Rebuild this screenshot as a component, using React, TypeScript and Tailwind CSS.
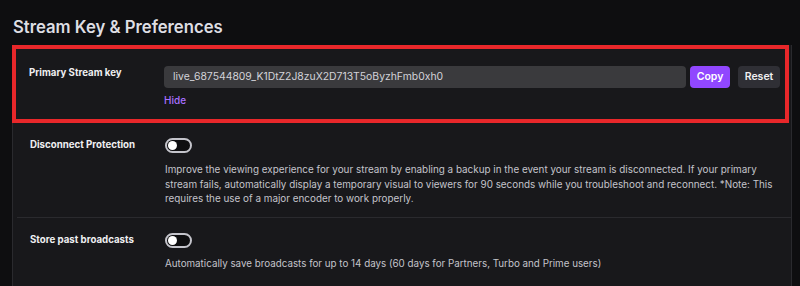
import React, { useState } from "react";

const Toggle = ({ on, onClick }: { on: boolean; onClick: () => void }) => (
  <button
    onClick={onClick}
    className="w-[27px] h-[15px] rounded-full border-2 border-[#c4c4cb] bg-[#0e0e10] flex items-center px-[1px]"
  >
    <span
      className={
        on
          ? "w-[9px] h-[9px] rounded-full bg-white ml-auto"
          : "w-[9px] h-[9px] rounded-full bg-white"
      }
    />
  </button>
);

const App = () => {
  const [hidden, setHidden] = useState(false);
  const [protect, setProtect] = useState(false);
  const [store, setStore] = useState(false);

  return (
    <div
      className="w-[800px] h-[286px] bg-[#0e0e10] overflow-hidden text-[#efeff1]"
      style={{ fontFamily: "Inter, 'Noto Sans', sans-serif" }}
    >
      <h1 className="pl-[13px] pt-[16px] h-[45px] text-[16.7px] font-semibold text-[#dedee3] leading-[22px]">
        Stream Key &amp; Preferences
      </h1>
      <div className="ml-[12px] w-[780px] bg-[#18181b] border-l border-r border-[#2a2a2e]">
        <div className="border-4 border-[#e8272a] -ml-[1px] w-[777px] h-[78px] flex pl-[13px] pt-[17px]">
          <div className="w-[135px] text-[9.7px] font-bold leading-[14px]">Primary Stream key</div>
          <div className="flex flex-col">
            <div className="flex items-center">
              <div className="w-[522px] h-[22px] rounded-[4px] bg-[#3a3a3d] text-[#d3d3d9] text-[10.4px] px-[9px] flex items-center">
                {hidden ? "••••••••••••••••••••••••••••••••••••••••" : "live_687544809_K1DtZ2J8zuX2D713T5oByzhFmb0xh0"}
              </div>
              <button className="ml-[4px] w-[40px] h-[22px] rounded-[4px] bg-[#9147ff] text-white text-[10.5px] font-semibold">
                Copy
              </button>
              <button className="ml-[8px] w-[42px] h-[22px] rounded-[4px] bg-[#2f2f35] text-[#efeff1] text-[10.5px] font-semibold">
                Reset
              </button>
            </div>
            <button
              onClick={() => setHidden(!hidden)}
              className="text-left text-[#a970ff] text-[10px] font-medium mt-[5px] leading-[14px]"
            >
              {hidden ? "Show" : "Hide"}
            </button>
          </div>
        </div>
        <div className="flex pl-[13px] pt-[15px] h-[95px] border-b border-[#2a2a2e] ml-[4px]">
          <div className="w-[135px] text-[9.7px] font-bold leading-[14px]">Disconnect Protection</div>
          <div className="flex flex-col">
            <Toggle on={protect} onClick={() => setProtect(!protect)} />
            <p className="mt-[9px] whitespace-nowrap text-[9.9px] leading-[14.5px] text-[#c4c4cb]">
              Improve the viewing experience for your stream by enabling a backup in the event your stream is disconnected. If your primary
              <br />
              stream fails, automatically display a temporary visual to viewers for 90 seconds while you troubleshoot and reconnect. *Note: This
              <br />
              requires the use of a major encoder to work properly.
            </p>
          </div>
        </div>
        <div className="flex pl-[17px] pt-[15px] h-[70px]">
          <div className="w-[135px] text-[9.7px] font-bold leading-[14px]">Store past broadcasts</div>
          <div className="flex flex-col">
            <Toggle on={store} onClick={() => setStore(!store)} />
            <p className="mt-[9px] text-[9.8px] leading-[14.5px] text-[#c4c4cb]">
              Automatically save broadcasts for up to 14 days (60 days for Partners, Turbo and Prime users)
            </p>
          </div>
        </div>
      </div>
    </div>
  );
};

export default App;
